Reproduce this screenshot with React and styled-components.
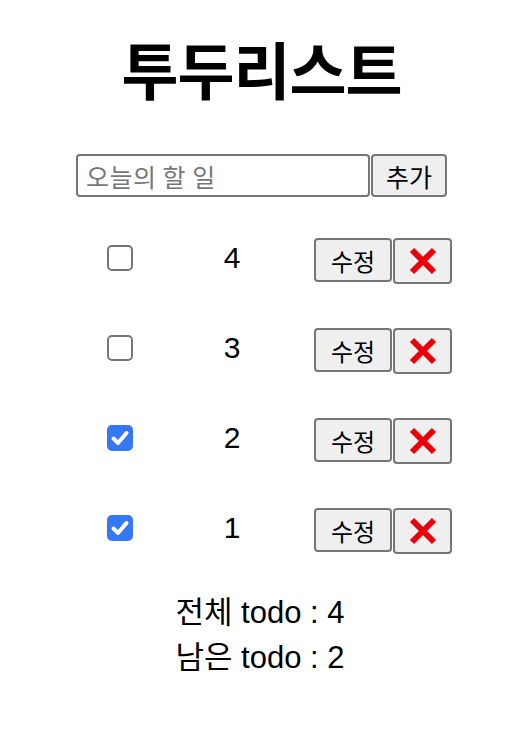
import React, { useState } from "react";
import styled, { createGlobalStyle } from "styled-components";

const Global = createGlobalStyle`
  html, body { margin: 0; padding: 0; background: #fff; }
  body { font-family: "Liberation Sans", "Noto Sans CJK KR", sans-serif; color: #000; }
`;

const Page = styled.div`
  width: 516px;
  box-sizing: border-box;
  padding-left: 12px;
`;

const Main = styled.main`
  width: 376px;
  margin: 0 auto;
  display: flex;
  flex-direction: column;
`;

const Title = styled.h1`
  margin: 28px 0 0;
  padding-right: 5px;
  height: 80px;
  line-height: 80px;
  text-align: center;
  font-family: "Noto Sans CJK KR", sans-serif;
  font-weight: 700;
  font-size: 62px;
  letter-spacing: -1px;
`;

const Form = styled.form`
  margin-top: 46px;
  display: flex;
  gap: 1px;
  height: 43px;
`;

const Input = styled.input`
  box-sizing: border-box;
  width: 294px;
  height: 43px;
  border: 2px solid #767676;
  border-radius: 4px;
  padding: 0 8px;
  font-family: "Noto Sans CJK KR", sans-serif;
  font-size: 25px;
  letter-spacing: 0.5px;
  outline: none;
  &::placeholder { color: #777; }
`;

const Button = styled.button`
  box-sizing: border-box;
  width: ${(p) => p.$w}px;
  height: ${(p) => p.$h}px;
  padding: 0;
  background: #efefef;
  border: 2px solid #767676;
  border-radius: 4px;
  font-family: "Noto Sans CJK KR", sans-serif;
  font-size: ${(p) => p.$fs || 24}px;
  color: #000;
  display: flex;
  align-items: center;
  justify-content: center;
`;

const List = styled.ul`
  list-style: none;
  margin: 16px 0 0;
  padding: 0;
`;

const Row = styled.li`
  height: 90px;
  display: grid;
  grid-template-columns: 88px 136px 152px;
  align-items: center;
`;

const Check = styled.span`
  justify-self: center;
  box-sizing: border-box;
  width: 26px;
  height: 26px;
  border-radius: 5px;
  border: ${(p) => (p.$on ? "none" : "2px solid #767676")};
  background: ${(p) => (p.$on ? "#3478f6" : "#fff")};
  display: flex;
  align-items: center;
  justify-content: center;
  cursor: pointer;
`;

const Num = styled.span`
  justify-self: center;
  font-size: 30px;
`;

const Actions = styled.div`
  justify-self: end;
  display: flex;
  align-items: flex-start;
  gap: 1px;
  padding-top: 6px;
`;

const Footer = styled.div`
  margin-top: 17px;
  padding-right: 8px;
  text-align: center;
  font-size: 31px;
`;

const Line = styled.div`
  height: 45px;
  line-height: 45px;
`;

const CheckMark = () => (
  <svg width="26" height="26" viewBox="0 0 26 26">
    <path d="M6.5 13.5 L11 18 L19.5 8" fill="none" stroke="#fff" strokeWidth="4" strokeLinecap="round" strokeLinejoin="round" />
  </svg>
);

const Cross = () => (
  <svg width="30" height="28" viewBox="0 0 30 28">
    <path d="M4 3 L26 25 M26 3 L4 25" stroke="#e8000b" strokeWidth="6" strokeLinecap="butt" />
  </svg>
);

export default function App() {
  const [todos, setTodos] = useState([
    { id: 4, done: false },
    { id: 3, done: false },
    { id: 2, done: true },
    { id: 1, done: true },
  ]);
  const toggle = (id) =>
    setTodos((t) => t.map((x) => (x.id === id ? { ...x, done: !x.done } : x)));
  const left = todos.filter((t) => !t.done).length;
  return (
    <Page>
      <Global />
      <Main>
        <Title>투두리스트</Title>
        <Form onSubmit={(e) => e.preventDefault()}>
          <Input placeholder="오늘의 할 일" />
          <Button $w={76} $h={43} $fs={25} type="submit">추가</Button>
        </Form>
        <List>
          {todos.map((t) => (
            <Row key={t.id}>
              <Check $on={t.done} onClick={() => toggle(t.id)}>
                {t.done && <CheckMark />}
              </Check>
              <Num>{t.id}</Num>
              <Actions>
                <Button $w={78} $h={44} type="button">수정</Button>
                <Button $w={59} $h={46} type="button"><Cross /></Button>
              </Actions>
            </Row>
          ))}
        </List>
        <Footer>
          <Line>전체 todo : {todos.length}</Line>
          <Line>남은 todo : {left}</Line>
        </Footer>
      </Main>
    </Page>
  );
}
